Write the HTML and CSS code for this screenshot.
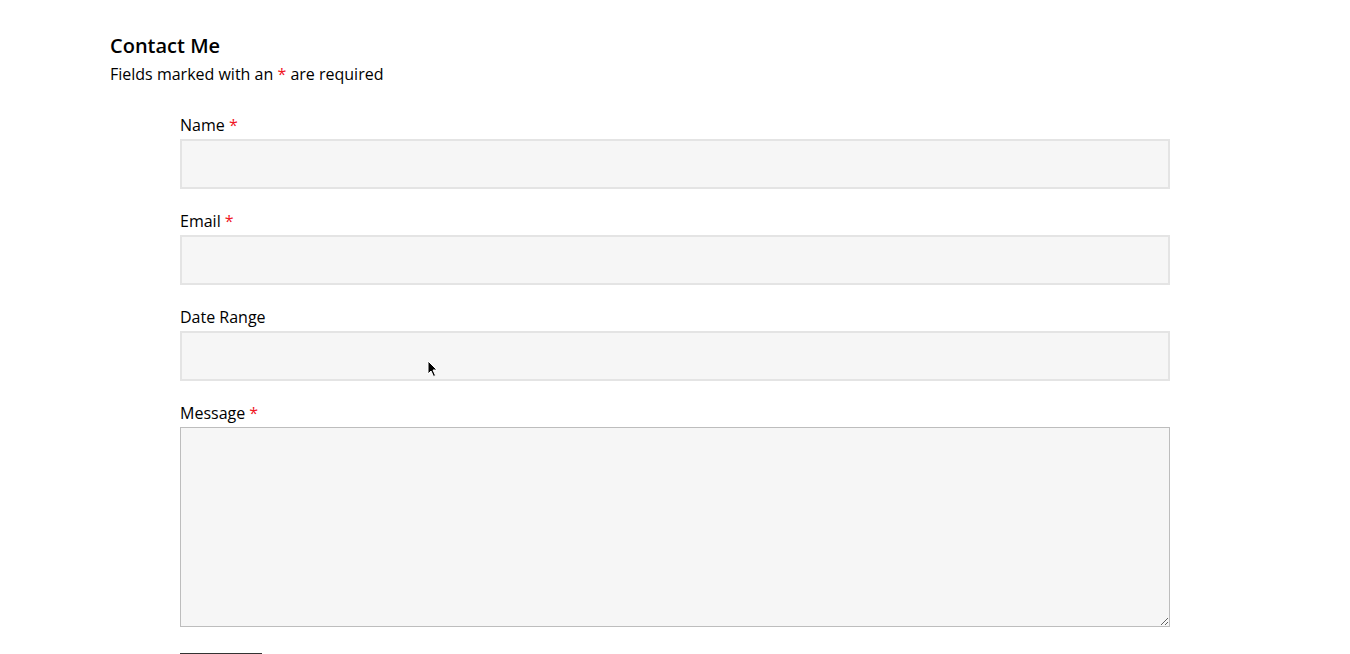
FILE: index.html
```html
<!DOCTYPE html>
<html lang="en">
<head>
<meta charset="utf-8">
<title>Contact Me</title>
<link rel="stylesheet" href="styles.css">
</head>
<body>
<div class="page">
  <h2 class="title">Contact Me</h2>
  <p class="note">Fields marked with an <span class="req">*</span> are required</p>
  <form class="form">
    <div class="field">
      <label class="label">Name <span class="req">*</span></label>
      <input class="input" type="text">
    </div>
    <div class="field">
      <label class="label">Email <span class="req">*</span></label>
      <input class="input" type="text">
    </div>
    <div class="field">
      <label class="label">Date Range</label>
      <input class="input" type="text">
    </div>
    <div class="field">
      <label class="label">Message <span class="req">*</span></label>
      <textarea class="textarea"></textarea>
    </div>
    <button class="submit" type="button">Submit</button>
  </form>
  <svg class="cursor" width="12" height="18" viewBox="0 0 12 18"><path d="M1 1 L1 14 L4 11 L6.5 16.5 L8.5 15.5 L6 10 L10 10 Z" fill="#000" stroke="#fff" stroke-width="1"/></svg>
</div>
</body>
</html>
```
FILE: styles.css
```css
* { box-sizing: border-box; }
html, body { margin: 0; padding: 0; background: #fff; }
body {
  font-family: "Open Sans", "Liberation Sans", sans-serif;
  color: #000;
  overflow: hidden;
  height: 654px;
}
.page {
  position: relative;
  padding: 32px 0 0 110px;
}
.title {
  margin: 0;
  font-size: 20px;
  line-height: 28px;
  font-weight: 600;
}
.note {
  margin: 2px 0 0;
  font-size: 16px;
  line-height: 24px;
}
.req { color: #f0141e; }
.form {
  margin: 27px 0 0 70px;
  width: 990px;
  display: flex;
  flex-direction: column;
  gap: 20px;
}
.field {
  display: flex;
  flex-direction: column;
  gap: 2px;
}
.label {
  font-size: 16px;
  line-height: 24px;
}
.input {
  height: 50px;
  width: 100%;
  border: 2px solid #e4e4e4;
  background: #f6f6f6;
  margin: 0;
  padding: 0 10px;
  font: inherit;
}
.textarea {
  height: 200px;
  width: 100%;
  border: 1px solid #bdbdbd;
  background: #f6f6f6;
  margin: 0;
  padding: 10px;
  font: inherit;
  resize: vertical;
}
.submit {
  margin-top: 6px;
  align-self: flex-start;
  width: 82px;
  height: 44px;
  padding: 12px 0 0;
  border: 0;
  border-top: 2px solid #333;
  background: #fff;
  font: inherit;
  color: #000;
}
.cursor {
  position: absolute;
  left: 427px;
  top: 360px;
}
```
